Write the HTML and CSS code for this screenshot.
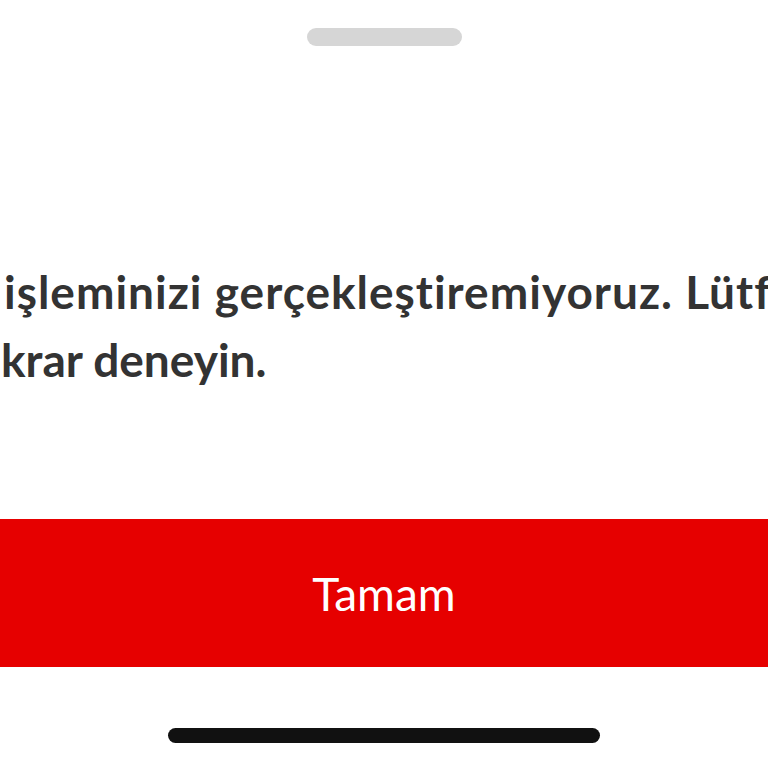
FILE: index.html
```html
<!DOCTYPE html>
<html lang="tr">
<head>
<meta charset="utf-8">
<title>Hata</title>
<link rel="stylesheet" href="styles.css">
</head>
<body>
<div class="sheet">
  <div class="grabber"></div>
  <p class="message">
    <span class="line line-1">işleminizi gerçekleştiremiyoruz. Lütf</span>
    <span class="line line-2">krar deneyin.</span>
  </p>
  <button class="ok-button" type="button">Tamam</button>
  <div class="home-indicator"></div>
</div>
</body>
</html>
```
FILE: styles.css
```css
html, body {
  margin: 0;
  padding: 0;
  background: #ffffff;
}
.sheet {
  width: 768px;
  height: 768px;
  overflow: hidden;
  display: flex;
  flex-direction: column;
  align-items: center;
  font-family: "Lato", "Open Sans", sans-serif;
}
.grabber {
  margin-top: 28px;
  width: 155px;
  height: 18px;
  border-radius: 9px;
  background: #d6d6d6;
  flex: none;
}
.message {
  margin: 212px 0 0 0;
  align-self: stretch;
  font-weight: 700;
  font-size: 46px;
  line-height: 68px;
  color: #333333;
  white-space: nowrap;
  overflow: hidden;
  font-variant-ligatures: none;
}
.line {
  display: block;
}
.line-1 {
  padding-left: 4px;
  letter-spacing: 1px;
}
.line-2 {
  padding-left: 1px;
}
.ok-button {
  margin-top: 125px;
  align-self: stretch;
  height: 148px;
  flex: none;
  border: 0;
  padding: 0;
  background: #e60000;
  color: #ffffff;
  font-family: "Lato", "Open Sans", sans-serif;
  font-size: 46px;
  font-weight: 400;
  display: flex;
  align-items: center;
  justify-content: center;
}
.home-indicator {
  margin-top: 61px;
  width: 432px;
  height: 15px;
  border-radius: 8px;
  background: #111111;
  flex: none;
}
```
